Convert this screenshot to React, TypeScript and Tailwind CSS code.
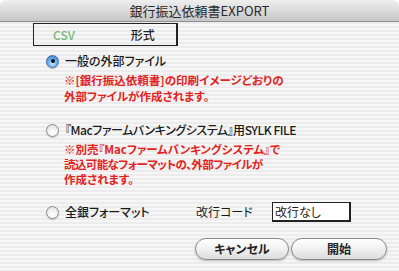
import React from 'react';

const font = { fontFamily: '"Noto Sans CJK JP", "Noto Sans", sans-serif' };

function Radio({ on }: { on?: boolean }) {
    if (on) {
        return (
            <span className="w-[13px] h-[13px] rounded-full border border-[#3b6fae] bg-[radial-gradient(circle_at_50%_70%,#c8e6ff_0%,#6fb0ef_45%,#2f73c9_100%)] flex items-center justify-center shrink-0 shadow-[0_1px_1px_rgba(0,0,0,0.25)]">
                <span className="w-[4px] h-[4px] rounded-full bg-[#111]" />
            </span>
        );
    }
    return (
        <span className="w-[13px] h-[13px] rounded-full border border-[#8c8c8c] bg-[radial-gradient(circle_at_50%_70%,#ffffff_0%,#f2f2f2_50%,#d2d2d2_100%)] shrink-0 shadow-[0_1px_1px_rgba(0,0,0,0.2)]" />
    );
}

function PillButton({ label, w }: { label: string; w: string }) {
    return (
        <div className={`${w} h-[22px] rounded-full border border-[#8a8a8a] bg-gradient-to-b from-[#ffffff] via-[#f1f1f1] to-[#dcdcdc] shadow-[0_1px_2px_rgba(0,0,0,0.25)] flex items-center justify-center text-[12px] font-bold text-[#222]`}>
            {label}
        </div>
    );
}

export default function App() {
    return (
        <div className="w-[399px] h-[271px] bg-white overflow-hidden [font-feature-settings:'palt']" style={font}>
            <div className="h-[22px] rounded-t-[6px] bg-gradient-to-b from-[#efefef] to-[#c6c6c6] border-b border-[#8e8e8e] flex items-center justify-center text-[13px] text-[#2a2a2a]">
                銀行振込依頼書EXPORT
            </div>

            <div className="h-[249px] bg-[repeating-linear-gradient(180deg,#ececec_0px,#ececec_2px,#f6f6f6_2px,#f6f6f6_4px)] pl-[33px] pt-[1px] flex flex-col">
                <div className="w-[145px] h-[23px] border border-[#222] border-r-2 flex items-center text-[12px] font-medium">
                    <span className="ml-[19px] text-[#74b874]">CSV</span>
                    <span className="ml-[56px] text-[#222]">形式</span>
                </div>

                <div className="mt-[7px] h-[16px] pl-[13px] flex items-center gap-[6px] text-[12px] font-medium text-[#1a1a1a]">
                    <Radio on />
                    <span>一般の外部ファイル</span>
                </div>
                <div className="mt-[3px] pl-[31px] text-[11.5px] leading-[16px] font-bold text-[#e2231c]">
                    <div>※[銀行振込依頼書]の印刷イメージどおりの</div>
                    <div>外部ファイルが作成されます。</div>
                </div>

                <div className="mt-[18px] h-[16px] pl-[13px] flex items-center gap-[6px] text-[12px] font-medium text-[#1a1a1a]">
                    <Radio />
                    <span className="tracking-[-0.45px]">『Macファームバンキングシステム』用SYLK FILE</span>
                </div>
                <div className="mt-[4px] pl-[31px] text-[11.5px] leading-[15px] font-bold text-[#e2231c]">
                    <div>※別売『Macファームバンキングシステム』で</div>
                    <div className="tracking-[-0.6px]">読込可能なフォーマットの、外部ファイルが</div>
                    <div>作成されます。</div>
                </div>

                <div className="mt-[15px] h-[20px] pl-[13px] flex items-center text-[12px] text-[#1a1a1a]">
                    <Radio />
                    <span className="ml-[6px] w-[131px] font-medium">全銀フォーマット</span>
                    <span className="w-[76px]">改行コード</span>
                    <div className="w-[79px] h-[20px] bg-white border border-[#222] border-r-2 border-b-2 flex items-center pl-[2px]">
                        改行なし
                    </div>
                </div>

                <div className="mt-[16px] pl-[162px] flex gap-[2px]">
                    <PillButton label="キャンセル" w="w-[94px]" />
                    <PillButton label="開始" w="w-[96px]" />
                </div>
            </div>
        </div>
    );
}
